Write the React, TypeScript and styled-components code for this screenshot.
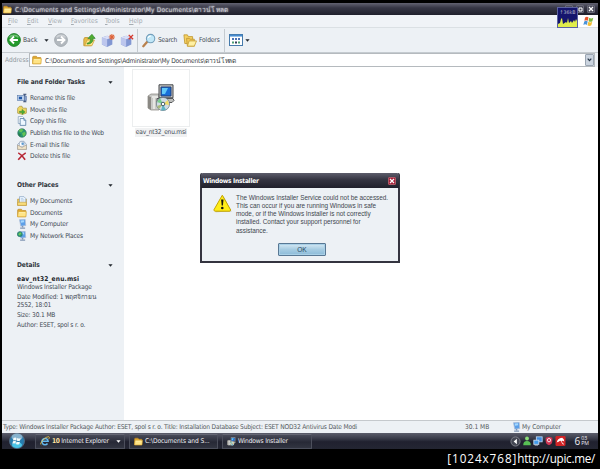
import { ReactNode } from 'react';
import styled, { createGlobalStyle } from 'styled-components';

const GlobalStyle = createGlobalStyle`
  * { box-sizing: border-box; }
  body {
    margin: 0;
    background: #000;
    overflow: hidden;
    font-family: "DejaVu Sans Condensed", "Noto Sans", sans-serif;
    font-size: 6.6px;
    color: #444b55;
  }
  svg { display: block; flex: none; }
`;

const Screen = styled.div`
  position: relative;
  width: 600px;
  height: 469px;
  padding: 3px 2px 0;
  background: #000;
`;

const Desktop = styled.div`
  display: flex;
  flex-direction: column;
  height: 446px;
  background: #edf1f5;
`;

const Text = styled.span<{ $track?: number }>`
  white-space: nowrap;
  letter-spacing: ${p => p.$track || 0}px;
`;

const TitleBar = styled.div`
  display: flex;
  align-items: center;
  gap: 3px;
  height: 12px;
  padding: 0 3px 0 1px;
  background: linear-gradient(#626271, #363645 40%, #20202d);
  color: #c8c8d2;
  text-shadow: 0 0 2px #fff;
`;

const WindowButton = styled.span<{ $red?: boolean }>`
  display: flex;
  align-items: center;
  justify-content: center;
  width: 8px;
  height: 8px;
  border-radius: 1px;
  border: 1px solid ${p => (p.$red ? '#ad5966' : '#686877')};
  background: ${p => (p.$red ? '#a51e38' : '#4b4b5a')};
`;

const Spacer = styled.span`
  flex: 1;
`;

const MenuBar = styled.div`
  display: flex;
  align-items: center;
  height: 13px;
  padding-left: 6px;
  background: #f0f3f7;
  border-bottom: 1px solid #dbe0e4;
  color: #a5acb2;
`;

const MenuItem = styled.span<{ $width: number }>`
  width: ${p => p.$width}px;

  &::first-letter {
    text-decoration: underline;
  }
`;

const FlagBox = styled.span`
  display: flex;
  align-items: center;
  justify-content: center;
  width: 20px;
  height: 12px;
  margin-left: auto;
  background: #fff;
`;

const ToolBar = styled.div`
  display: flex;
  align-items: center;
  height: 25px;
  padding: 0 5px;
  border-bottom: 1px solid #c5cbd0;
`;

const ToolItem = styled.div<{ $width: number }>`
  display: flex;
  align-items: center;
  gap: 2px;
  width: ${p => p.$width}px;
`;

const Divider = styled.span`
  width: 1px;
  height: 23px;
  margin-right: 4px;
  background: #c5cbd0;
`;

const AddressBar = styled.div`
  display: flex;
  align-items: center;
  height: 14px;
  padding: 0 3px 0 3px;
  color: #92999f;
`;

const AddressField = styled.div`
  display: flex;
  align-items: center;
  gap: 3px;
  width: 566px;
  height: 14px;
  margin-left: auto;
  padding: 0 0 0 2px;
  border: 1px solid #b5babe;
  background: #fff;
  color: #383e44;
`;

const DropButton = styled.span`
  display: flex;
  align-items: center;
  justify-content: center;
  width: 9px;
  height: 12px;
  border: 1px solid #9aa5b2;
  border-radius: 1px;
  background: #cbd4df;
`;

const Content = styled.div`
  display: flex;
  flex: 1;
  min-height: 0;
  background: #fff;
`;

const Sidebar = styled.div`
  width: 122px;
  padding: 9px 11px 0 15px;
  background: #edf1f5;
`;

const Section = styled.section<{ $height: number }>`
  height: ${p => p.$height}px;
`;

const SectionHead = styled.div`
  display: flex;
  align-items: center;
  justify-content: space-between;
  height: 12px;
  margin-bottom: 4px;
  font-weight: bold;
  color: #30363d;
`;

const Link = styled.div`
  display: flex;
  align-items: center;
  gap: 3px;
  height: 11.7px;
`;

const Detail = styled.div<{ $gap?: number; $bold?: boolean }>`
  height: 8px;
  margin-top: ${p => p.$gap || 0}px;
  line-height: 8px;
  white-space: nowrap;
  font-weight: ${p => (p.$bold ? 'bold' : 'normal')};
  letter-spacing: ${p => (p.$bold ? '.16px' : '-.16px')};
  ${p => p.$bold && 'color: #22262c;'}
`;

const FileItem = styled.div`
  display: flex;
  flex-direction: column;
  align-items: center;
  width: 58px;
  height: 72px;
  margin: 2px 0 0 8px;
`;

const Thumb = styled.div`
  display: flex;
  align-items: center;
  justify-content: center;
  width: 58px;
  height: 58px;
  border: 1px solid #eceeef;
`;

const FileName = styled.span`
  margin-top: 1px;
  padding: 0 1px;
  line-height: 9px;
  background: #f0f1f2;
  letter-spacing: -.22px;
`;

const StatusBar = styled.div`
  display: flex;
  align-items: center;
  height: 13px;
  border-top: 1px solid #c5c9cd;
  color: #555b60;
`;

const StatusCell = styled.div<{ $width: number }>`
  display: flex;
  align-items: center;
  gap: 1px;
  width: ${p => p.$width}px;
  padding-left: 1px;
`;

const TaskBar = styled.div`
  display: flex;
  align-items: center;
  gap: 4px;
  height: 16px;
  padding-left: 7px;
  background: linear-gradient(#5b5d6b, #383a48 35%, #20212f 55%, #242633);
  color: #f0f0f4;
`;

const StartButton = styled.div`
  width: 22px;
`;

const Task = styled.div<{ $width: number }>`
  display: flex;
  align-items: center;
  gap: 2px;
  width: ${p => p.$width}px;
  height: 15px;
  padding: 0 3px 0 4px;
  border: 1px solid #4c4f5c;
  border-top-color: #666875;
  background: linear-gradient(#484b59, #272936 55%, #323541);
`;

const Count = styled.b`
  color: #ffe3a0;
  letter-spacing: -.5px;
`;

const Tray = styled.div`
  display: flex;
  align-items: center;
  gap: 1px;
  margin: 0 9px 0 auto;
`;

const Clock = styled.div`
  display: flex;
  align-items: center;
  gap: 1px;
  margin-left: 7px;
  font-family: "Open Sans", sans-serif;
  font-size: 10px;
`;

const ClockStack = styled.span`
  display: flex;
  flex-direction: column;
  font-size: 5.2px;
  line-height: 5.5px;
`;

const Footer = styled.div`
  display: flex;
  justify-content: flex-end;
  height: 20px;
  padding-right: 3px;
  color: #fff;
  font-family: "Open Sans", sans-serif;
  font-size: 11.7px;
  line-height: 18px;
`;

const Meter = styled.div`
  position: absolute;
  left: 557px;
  top: 7px;
  width: 21px;
  height: 21px;
  border: 1px solid #5c62a0;
  background: #15156d;
  color: #b8b8ca;
  font-size: 5.2px;
  line-height: 8px;
  text-align: center;
`;

const Dialog = styled.div`
  position: absolute;
  left: 200px;
  top: 173px;
  width: 200px;
  height: 90px;
  border: 2px solid #34343f;
  border-top: 0;
  border-radius: 2px 2px 0 0;
  background: #edf1f5;
`;

const DialogTitle = styled.div`
  display: flex;
  align-items: center;
  justify-content: space-between;
  height: 15px;
  padding: 0 3px 0 2px;
  margin: 0 -1px;
  border-radius: 2px 2px 0 0;
  background: linear-gradient(#5d5d6b, #343441 45%, #20202c);
  color: #fff;
  font-weight: bold;
`;

const DialogBody = styled.div`
  display: flex;
  gap: 4px;
  padding: 6px 0 0 11px;
  font-family: "Liberation Sans", Arial, sans-serif;
  font-size: 6.4px;
  line-height: 8.15px;
  color: #41474f;
`;

const OkButton = styled.button`
  display: block;
  width: 48px;
  height: 13px;
  margin: 8px 0 0 76px;
  padding: 0;
  border: 1px solid #587894;
  border-radius: 1px;
  box-shadow: inset 0 0 0 1px #a9d0e7;
  background: linear-gradient(#d5e8f3, #a6cce2 50%, #8cbbd9);
  color: #28475e;
  font: 6.6px "Liberation Sans", Arial, sans-serif;
`;

const Arrow = () => (
  <svg width="5" height="3" viewBox="0 0 5 3"><path d="M.4.3h4.2L2.5 2.8z" fill="#20262c" /></svg>
);

const Cross = () => (
  <svg width="6" height="6" viewBox="0 0 6 6"><path d="M1 1l4 4M5 1L1 5" stroke="#fff" strokeWidth="1.2" /></svg>
);

const FolderIcon = ({ size = 10 }: { size?: number }) => (
  <svg width={size} height={size} viewBox="0 0 16 16">
    <path d="M1 3l1-1h5l2 2h5v10H1z" fill="#dfa82f" stroke="#b98523" />
    <path d="M2 6h13l-1 8H1z" fill="#ffe486" stroke="#d9aa37" />
    <path d="M3 7.3h10" stroke="#fff8c5" />
  </svg>
);

const NavIcon = ({ forward }: { forward?: boolean }) => (
  <svg width="14" height="14" viewBox="0 0 16 16">
    <circle cx="8" cy="8" r="7.3" fill={forward ? '#b3b9bf' : '#249b2c'} stroke={forward ? '#9fa6ac' : '#177d22'} />
    <path d="M3 5a5.5 4 0 0 1 10 0" fill="none" stroke="#fff" strokeOpacity=".35" strokeWidth="2" />
    <path
      d={forward ? 'M3.5 8h8M8 4l4 4-4 4' : 'M12.5 8h-8M8 4L4 8l4 4'}
      fill="none" stroke="#fff" strokeWidth="2.1"
    />
  </svg>
);

const UpIcon = () => (
  <svg width="13" height="14" viewBox="0 0 16 16">
    <path d="M1 7l1-2h4l2 2h4l-2 8H1z" fill="#e9bf48" stroke="#bd9330" />
    <path d="M2 15l3-7h9l-3 7z" fill="#ffe78c" stroke="#cca23d" />
    <path d="M5 12c4-1 5-4 4-6H6l5-5 4 5h-3c1 4-2 7-7 7z" fill="#50ad31" stroke="#2d842a" strokeWidth=".8" />
  </svg>
);

const CubeIcon = ({ remove }: { remove?: boolean }) => (
  <svg width="14" height="13" viewBox="0 0 16 15">
    <path d="M1 4l6-2 6 2v8l-6 3-6-3z" fill="#8297d2" />
    <path d="M1 4l6 2v9l-6-3z" fill="#bcc6ed" />
    <path d="M1 4l6-2 6 2-6 2z" fill="#d8def7" />
    {remove
      ? <path d="M10 1l5 5M15 1l-5 5" stroke="#d43a2f" strokeWidth="1.6" />
      : <path d="M12.5 0v7M9 3.5h7M10 1l5 5M15 1l-5 5" stroke="#df6235" strokeWidth="1.2" />}
  </svg>
);

const SearchIcon = () => (
  <svg width="14" height="15" viewBox="0 0 16 16">
    <path d="M1.5 14.5L6 9.5" stroke="#b9814d" strokeWidth="2.6" strokeLinecap="round" />
    <circle cx="9.8" cy="5.8" r="4.8" fill="#c1e7f7" stroke="#729ebb" strokeWidth="1.2" />
    <path d="M7 5a3 3 0 0 1 3-2" fill="none" stroke="#fff" strokeWidth="1.4" />
  </svg>
);

const FoldersIcon = () => (
  <svg width="14" height="13" viewBox="0 0 16 15">
    <path d="M1 1h4l1 2h5v8H2z" fill="#f6d263" stroke="#c29a37" />
    <path d="M4 5h3l1 1h5v8H5z" fill="#f2c754" stroke="#c29a37" />
    <path d="M7 8h8.5L13 14H5z" fill="#fff0a2" stroke="#c9a340" />
  </svg>
);

const ViewsIcon = () => (
  <svg width="14" height="12" viewBox="0 0 14 12">
    <rect x=".5" y=".5" width="13" height="11" fill="#fff" stroke="#467bac" />
    <path d="M1 1.7h12" stroke="#478cd0" strokeWidth="1.7" />
    <path d="M3 5h2M6 5h2M9 5h2" stroke="#4d73b5" strokeWidth="2" />
    <path d="M3 8.5h2M9 8.5h2" stroke="#4b9e73" strokeWidth="2" />
    <path d="M6 8.5h2" stroke="#333e57" strokeWidth="2" />
  </svg>
);

const WindowsFlag = ({ size = 11 }: { size?: number }) => (
  <svg width={size} height={size} viewBox="0 0 16 16">
    <path d="M3 2q3-2 5 0L7 7Q5 5 2 7z" fill="#e9552d" />
    <path d="M9 2.5q3 2 6 0l-1.4 5q-3 1.5-5.5 0z" fill="#7bb842" />
    <path d="M1.8 8q3-2 5 0l-1.3 5q-2-2-5 0z" fill="#4a94da" />
    <path d="M7.8 8.5q3 2 5.6 0l-1.3 5q-3 2-5.6 0z" fill="#f4bd31" />
  </svg>
);

const RenameIcon = () => (
  <svg width="10" height="10" viewBox="0 0 16 16">
    <rect x="1" y="4" width="11" height="8" fill="#b9cdea" stroke="#5c7dad" />
    <rect x="3" y="6" width="5" height="4" fill="#1f57a8" />
    <path d="M10 2h5M12.5 2v12M10 14h5" stroke="#273e68" strokeWidth="1.5" />
    <path d="M12 5h3v7h-3" fill="#8aa5d0" stroke="#536f9e" />
  </svg>
);

const MoveIcon = () => (
  <svg width="10" height="10" viewBox="0 0 16 16">
    <path d="M1 5l3-3h4l1 3h6v8l-6 2-8-2z" fill="#efd660" stroke="#a08b33" />
    <path d="M4 10h4V7l5 4-5 4v-3H4z" fill="#4cae37" stroke="#31842a" strokeWidth=".7" />
  </svg>
);

const CopyIcon = () => (
  <svg width="10" height="10" viewBox="0 0 16 16">
    <path d="M2 1h7l2 2v9H2z" fill="#fff" stroke="#6f8eb0" />
    <path d="M5 4h6l3 3v8H5z" fill="#eef7ff" stroke="#4c769f" strokeWidth="1.2" />
    <path d="M11 4v3h3" fill="none" stroke="#4c769f" />
  </svg>
);

const GlobeIcon = () => (
  <svg width="10" height="10" viewBox="0 0 16 16">
    <circle cx="8" cy="8" r="6.8" fill="#2a9871" stroke="#236555" />
    <path d="M3 3q4-3 7 0l-3 4-3-1zM8 8l5-2 1 4-4 4z" fill="#64c354" />
    <path d="M2 8l4 2-1 4q-3-2-3-6" fill="#247c4c" />
  </svg>
);

const MailIcon = () => (
  <svg width="10" height="10" viewBox="0 0 16 16">
    <path d="M1 7l5-5h5l4 5v8H1z" fill="#dbe5f2" stroke="#8093ad" />
    <path d="M4 3h7v7H4z" fill="#fff" stroke="#98a8bc" />
    <path d="M1 8l7 4 7-4v7H1z" fill="#f1e4c8" stroke="#a79c87" />
    <circle cx="9" cy="6" r="2" fill="#5c9bd0" />
  </svg>
);

const DeleteIcon = () => (
  <svg width="10" height="10" viewBox="0 0 16 16">
    <path d="M2 3q6 3 11 11M14 3Q7 7 2 14" fill="none" stroke="#b72735" strokeWidth="2.5" />
  </svg>
);

const DocumentsIcon = () => (
  <svg width="10" height="10" viewBox="0 0 16 16">
    <path d="M1 5h14v10H1z" fill="#edcb5a" stroke="#b58d35" />
    <path d="M4 1h7l3 3v8H4z" fill="#edf6ff" stroke="#7b9abd" />
    <path d="M6 4h4M6 6h6M6 8h6" stroke="#a6c0db" />
    <path d="M1 10h14v5H1z" fill="#f8dc79" stroke="#c09b40" />
  </svg>
);

const ComputerIcon = ({ network }: { network?: boolean }) => (
  <svg width="10" height="10" viewBox="0 0 16 16">
    <path d="M4 1l9-.5 1 10-8 1z" fill="#5c9fe8" stroke="#adbed6" strokeWidth="1.2" />
    <path d="M6 2.5l5-.4.4 3-5 1z" fill="#a4d8ff" />
    <path d="M9 11v2m-4 1.5h8" stroke="#8095b3" strokeWidth="2" />
    {network && <circle cx="4.5" cy="5" r="4" fill="#2c9a79" stroke="#287165" />}
    {network && <path d="M2 5l3-3 2 2-3 3z" fill="#74c857" />}
  </svg>
);

const InstallerIcon = ({ size = 28 }: { size?: number }) => (
  <svg width={size} height={size} viewBox="0 0 28 28">
    <path d="M1 12l3-2h8v16H4l-3-2z" fill="#c8c9c6" stroke="#85827c" strokeWidth=".7" />
    <path d="M1 12l3 1v13l-3-2z" fill="#8a8883" />
    <path d="M5 13h6M7 14v11" stroke="#efefed" strokeWidth="1.5" />
    <path d="M12 .8h14v13H12z" fill="#c9cac8" stroke="#44474b" />
    <path d="M14 3h10v9H14z" fill="#176ed8" stroke="#253d73" />
    <path d="M15 4h6l-3 6h-3z" fill="#61c8f8" />
    <path d="M10 14.5h16l1 2-2 2H10z" fill="#bebfbd" stroke="#55575a" />
    <circle cx="16" cy="20" r="6.6" fill="#d0dce4" stroke="#64757f" strokeWidth=".7" />
    <path d="M16 20l-6-2 3-4z" fill="#76cd8c" />
    <path d="M16 20l5-4 1 5z" fill="#efda63" />
    <path d="M16 20l3 6-5 .5z" fill="#5eb5c5" />
    <path d="M16 20l-4 5-2-3z" fill="#a8b978" />
    <circle cx="16" cy="20" r="1.8" fill="#fff" stroke="#425c65" />
  </svg>
);

const WarningIcon = () => (
  <svg width="19" height="19" viewBox="0 0 19 19">
    <path d="M10.5 2.2L18.5 17.5l-16 .8z" fill="#a4a17d" opacity=".7" />
    <path d="M9.3 1.2L17.7 16 16.8 17.2H1.7L.8 16z" fill="#ffed18" stroke="#c5a500" strokeLinejoin="round" />
    <path d="M8.1 5.5h2.4l-.6 6H8.7z" fill="#17170f" />
    <circle cx="9.3" cy="14" r="1.3" fill="#17170f" />
  </svg>
);

const IEIcon = () => (
  <svg width="10" height="10" viewBox="0 0 16 16">
    <path d="M4 8.5h9A5 5 0 1 0 12 12" fill="none" stroke="#63b8ee" strokeWidth="2.5" />
    <path d="M2 14Q-1 13 5 6q5-5 9-5 2 1 0 4" fill="none" stroke="#f2c847" strokeWidth="1.3" />
  </svg>
);

const StartOrb = () => (
  <svg width="16" height="16" viewBox="0 0 16 16">
    <circle cx="8" cy="8" r="7.5" fill="#287cad" stroke="#50677d" />
    <ellipse cx="8" cy="12" rx="5" ry="3" fill="#49c5e8" />
    <ellipse cx="8" cy="4" rx="5.5" ry="3.5" fill="#a5c6da" opacity=".75" />
    <path d="M4.5 5q2-1 3 0L7 7.5q-1-1-3 0zM8.2 5q2 1 3.5 0L11 7.6q-1 1-3.3 0zM4 8.2q2-1 3 0l-.7 2.6q-1-1-3 0zM7.7 8.4q2 1 3.3 0l-.7 2.6q-1.5 1-3.3 0z" fill="#f2fafa" />
  </svg>
);

const TrayArrow = () => (
  <svg width="11" height="11" viewBox="0 0 12 12">
    <circle cx="6" cy="6" r="5" fill="#444753" stroke="#81838c" />
    <path d="M7.5 3v6L4 6z" fill="#fff" />
  </svg>
);

const BuddyIcon = () => (
  <svg width="10" height="10" viewBox="0 0 12 12">
    <circle cx="6" cy="3" r="2.3" fill="#8add77" />
    <path d="M1.5 11q0-5 4.5-5t4.5 5z" fill="#58c055" />
  </svg>
);

const LanIcon = () => (
  <svg width="10" height="10" viewBox="0 0 12 12">
    <rect x="4" y="1" width="7" height="6" fill="#3f8ce0" stroke="#bdd8f3" />
    <rect x="1" y="5" width="6" height="5" fill="#449cec" stroke="#cee1f4" />
    <path d="M2 11h4" stroke="#b8c8d9" />
  </svg>
);

const ShieldIcon = () => (
  <svg width="10" height="10" viewBox="0 0 12 12">
    <path d="M2 2l4-1 4 1v4q0 4-4 5-4-1-4-5z" fill="#cf3553" />
    <circle cx="6" cy="5" r="2" fill="none" stroke="#fff" />
  </svg>
);

const UmbrellaIcon = () => (
  <svg width="11" height="10" viewBox="0 0 12 12">
    <rect width="12" height="12" rx="1.5" fill="#d22426" />
    <path d="M1.5 8Q2 2.5 8 2q2.500 1.500 2.500 4.500-2-1.500-3.500-.5-2-.8-3 .8-1.500-.3-2.500 1.200z" fill="#fff" />
    <path d="M6.500 5.500l2.500 4.500 1-.8" fill="none" stroke="#fff" strokeWidth=".9" />
  </svg>
);

const tasks: [ReactNode, string][] = [
  [<RenameIcon />, 'Rename this file'],
  [<MoveIcon />, 'Move this file'],
  [<CopyIcon />, 'Copy this file'],
  [<GlobeIcon />, 'Publish this file to the Web'],
  [<MailIcon />, 'E-mail this file'],
  [<DeleteIcon />, 'Delete this file'],
];

const places: [ReactNode, string][] = [
  [<DocumentsIcon />, 'My Documents'],
  [<FolderIcon />, 'Documents'],
  [<ComputerIcon />, 'My Computer'],
  [<ComputerIcon network />, 'My Network Places'],
];

const menus: [string, number][] = [
  ['File', 19], ['Edit', 21], ['View', 23], ['Favorites', 34], ['Tools', 24], ['Help', 20],
];

const path = 'C:\\Documents and Settings\\Administrator\\My Documents\\ดาวน์โหลด';

const LinkList = ({ items }: { items: [ReactNode, string][] }) => (
  <>
    {items.map(([icon, label]) => (
      <Link key={label}>{icon}<Text $track={-.18}>{label}</Text></Link>
    ))}
  </>
);

const App = () => {
  return <>
    <GlobalStyle />
    <Screen>
      <Desktop>
        <TitleBar>
          <FolderIcon size={9} />
          <Text $track={.13}>{path}</Text>
          <Spacer />
          <WindowButton><svg width="5" height="5"><path d="M1 4h3" stroke="#fff" /></svg></WindowButton>
          <WindowButton><svg width="5" height="5"><path d="M1 1h3v3H1z" stroke="#fff" fill="none" /></svg></WindowButton>
          <WindowButton><Cross /></WindowButton>
        </TitleBar>
        <MenuBar>
          {menus.map(([label, width]) => <MenuItem key={label} $width={width}>{label}</MenuItem>)}
          <FlagBox><WindowsFlag /></FlagBox>
        </MenuBar>
        <ToolBar>
          <ToolItem $width={47}><NavIcon /><Text>Back</Text><Spacer /><Arrow /><Spacer /></ToolItem>
          <ToolItem $width={29}><NavIcon forward /></ToolItem>
          <ToolItem $width={18}><UpIcon /></ToolItem>
          <ToolItem $width={19}><CubeIcon /></ToolItem>
          <ToolItem $width={17}><CubeIcon remove /></ToolItem>
          <Divider />
          <ToolItem $width={41}><SearchIcon /><Text $track={-.2}>Search</Text></ToolItem>
          <ToolItem $width={41}><FoldersIcon /><Text $track={-.1}>Folders</Text></ToolItem>
          <Divider />
          <ToolItem $width={25}><ViewsIcon /><Arrow /></ToolItem>
        </ToolBar>
        <AddressBar>
          <Text>Address</Text>
          <AddressField>
            <FolderIcon />
            <Text $track={-.23}>{path}</Text>
            <Spacer />
            <DropButton>
              <svg width="5" height="4"><path d="M.7.7l1.8 2L4.3.7" fill="none" stroke="#273646" strokeWidth="1.2" /></svg>
            </DropButton>
          </AddressField>
        </AddressBar>
        <Content>
          <Sidebar>
            <Section $height={103}>
              <SectionHead><Text $track={-.1}>File and Folder Tasks</Text><Arrow /></SectionHead>
              <LinkList items={tasks} />
            </Section>
            <Section $height={80}>
              <SectionHead><Text $track={-.1}>Other Places</Text><Arrow /></SectionHead>
              <LinkList items={places} />
            </Section>
            <Section $height={90}>
              <SectionHead><Text $track={-.1}>Details</Text><Arrow /></SectionHead>
              <Detail $gap={3} $bold>eav_nt32_enu.msi</Detail>
              <Detail>Windows Installer Package</Detail>
              <Detail $gap={2}>Date Modified: 1 พฤศจิกายน</Detail>
              <Detail>2552, 18:01</Detail>
              <Detail $gap={2}>Size: 30.1 MB</Detail>
              <Detail $gap={2}>Author: ESET, spol s r. o.</Detail>
            </Section>
          </Sidebar>
          <FileItem>
            <Thumb><InstallerIcon /></Thumb>
            <FileName>eav_nt32_enu.msi</FileName>
          </FileItem>
        </Content>
        <StatusBar>
          <StatusCell $width={462}>
            <Text $track={-.19}>Type: Windows Installer Package Author: ESET, spol s r. o. Title: Installation Database Subject: ESET NOD32 Antivirus Date Modi</Text>
          </StatusCell>
          <StatusCell $width={46}><Text>30.1 MB</Text></StatusCell>
          <StatusCell $width={80}><ComputerIcon /><Text $track={-.1}>My Computer</Text></StatusCell>
        </StatusBar>
        <TaskBar>
          <StartButton><StartOrb /></StartButton>
          <Task $width={90}>
            <IEIcon />
            <Count>10</Count><Text $track={-.15}>Internet Explorer</Text>
            <Spacer />
            <svg width="5" height="3"><path d="M.4.2h4.2L2.5 2.7z" fill="#fff" /></svg>
          </Task>
          <Task $width={89}><FolderIcon size={9} /><Text $track={-.08}>C:\Documents and S...</Text></Task>
          <Task $width={90}><InstallerIcon size={9} /><Text $track={-.15}>Windows Installer</Text></Task>
          <Tray>
            <TrayArrow /><BuddyIcon /><LanIcon /><ShieldIcon /><UmbrellaIcon />
            <Clock>
              <span>6</span>
              <ClockStack><span>03</span><span>PM</span></ClockStack>
            </Clock>
          </Tray>
        </TaskBar>
      </Desktop>
      <Footer><Text $track={.95}>[1024x768]</Text><Text $track={-.28}>http://upic.me/</Text></Footer>

      <Meter>
        ↑36kB
        <svg width="19" height="11" viewBox="0 0 19 11">
          <path d="M0 11V8l2-1 1-4 1-1 1 6 3-2 1 1 1-5 1 5 2-2 1 2 2-3 1 2 1-3 1 2v6z" fill="#e1ed4b" />
        </svg>
      </Meter>

      <Dialog>
        <DialogTitle>
          <Text $track={-.26}>Windows Installer</Text>
          <WindowButton $red><Cross /></WindowButton>
        </DialogTitle>
        <DialogBody>
          <WarningIcon />
          <Text $track={-.02}>
            The Windows Installer Service could not be accessed.<br />
            This can occur if you are running Windows in safe<br />
            mode, or if the Windows Installer is not correctly<br />
            installed. Contact your support personnel for<br />
            assistance.
          </Text>
        </DialogBody>
        <OkButton>OK</OkButton>
      </Dialog>
    </Screen>
  </>;
};

export default App;
